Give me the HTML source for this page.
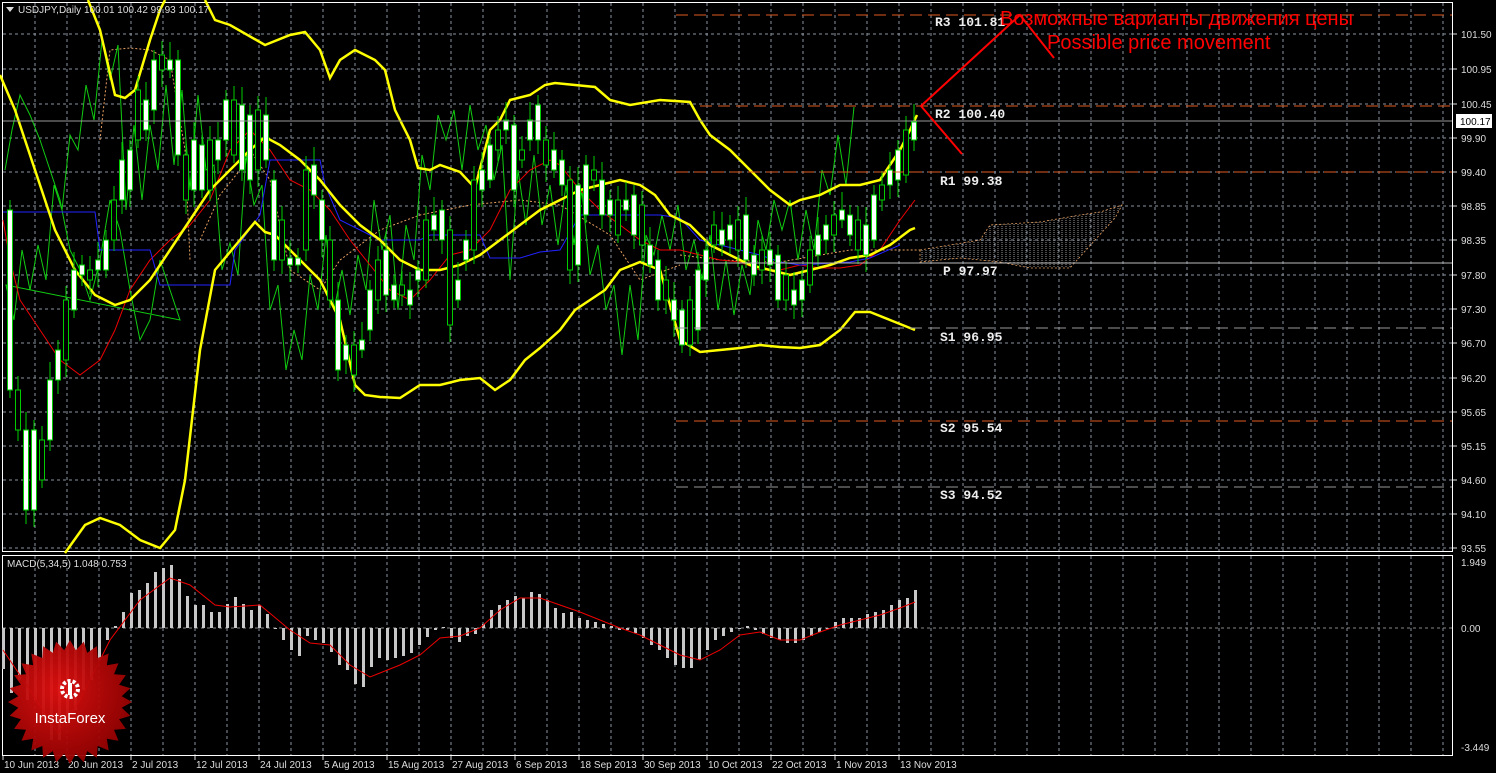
<!DOCTYPE html>
<html><head><meta charset="utf-8"><style>
html,body{margin:0;padding:0;background:#000;width:1496px;height:773px;overflow:hidden}
svg{display:block}
text{font-family:"Liberation Sans",sans-serif}
text.mono{font-family:"Liberation Mono",monospace;font-weight:bold;font-size:13px;fill:#eee}
</style></head><body>
<svg id="s" width="1496" height="773" xmlns="http://www.w3.org/2000/svg">
<defs>
<pattern id="hat" width="4" height="4" patternUnits="userSpaceOnUse"><path d="M2 0V4" stroke="#bbb" stroke-width="0.8" stroke-dasharray="1,1"/></pattern>
</defs>
<rect width="1496" height="773" fill="#000"/>
<g id="grid"></g>
<rect x="2.5" y="2.5" width="1450" height="549" fill="none" stroke="#fff"/>
<rect x="2.5" y="555.5" width="1450" height="200" fill="none" stroke="#fff"/>
<line x1="3" y1="628" x2="1452" y2="628" stroke="#888" stroke-dasharray="3,3"/>
<path d="M920 250 L980 240 L990 225 L1040 222 L1080 215 L1100 212 L1122 205 L1115 218 L1095 240 L1070 268 L1030 268 L1000 262 L960 258 L920 262Z" fill="url(#hat)" stroke="#e8a060" stroke-dasharray="2,2" stroke-width="0.8"/>
<path d="M680 255 L720 260 L780 262 L850 250 L920 250" fill="none" stroke="#e8a060" stroke-dasharray="2,2"/>
<path d="M100 140 L110 50 L130 48 L150 50 L170 60 L185 150 L190 260 M200 240 L220 195 L240 170 L250 150 L270 180 L290 270 L320 290 L340 260 L380 230 L420 215 L470 205 L520 200 L560 205 L610 235 L640 280 L680 265" fill="none" stroke="#e8a060" stroke-dasharray="2,2"/>
<g id="ind"></g>
<g id="candles"></g>
<g id="macd"></g>
<g stroke-width="1">
<line x1="676" y1="15" x2="1452" y2="15" stroke="#e05a20" stroke-dasharray="12,6"/>
<line x1="700" y1="106" x2="1452" y2="106" stroke="#e05a20" stroke-dasharray="12,6"/>
<line x1="676" y1="172" x2="1452" y2="172" stroke="#e05a20" stroke-dasharray="12,6"/>
<line x1="676" y1="263" x2="1452" y2="263" stroke="#bbb"/>
<line x1="676" y1="328" x2="1452" y2="328" stroke="#999" stroke-dasharray="12,6"/>
<line x1="676" y1="421" x2="1452" y2="421" stroke="#e05a20" stroke-dasharray="12,6"/>
<line x1="676" y1="487" x2="1452" y2="487" stroke="#999" stroke-dasharray="12,6"/>
<line x1="3" y1="121" x2="1452" y2="121" stroke="#999"/>
</g>
<text class="mono" x="935" y="26">R3 101.81</text>
<text class="mono" x="935" y="118">R2 100.40</text>
<text class="mono" x="940" y="185">R1 99.38</text>
<text class="mono" x="943" y="275">P 97.97</text>
<text class="mono" x="940" y="341">S1 96.95</text>
<text class="mono" x="940" y="432">S2 95.54</text>
<text class="mono" x="940" y="499">S3 94.52</text>
<g stroke="#f00" stroke-width="2" fill="none">
<path d="M962 154 L921 106 L1020 15 L1054 58"/>
</g>
<text x="1000" y="25" font-size="20" fill="#f00">Возможные варианты движения цены</text>
<text x="1047" y="49" font-size="20" fill="#f00">Possible price movement</text>
<path d="M6 7 L14 7 L10 12Z" fill="#ddd"/>
<text x="18" y="13" font-size="10" fill="#ddd">USDJPY,Daily  100.01 100.42 99.93 100.17</text>
<text x="7" y="567" font-size="10" fill="#ddd">MACD(5,34,5) 1.048 0.753</text>
<g id="axis" font-size="10" fill="#ddd"></g>
<rect x="1456" y="114" width="36" height="14" fill="#fff"/>
<text x="1460" y="125" font-size="10" fill="#000">100.17</text>
<g id="logo"></g>
</svg>
<script>
function add(id,html){document.getElementById(id).insertAdjacentHTML('beforeend',html);}
let g='';
for(let x=35;x<1452;x+=32){g+=`<line x1="${x}" y1="3" x2="${x}" y2="551" stroke="#8a92a0" stroke-dasharray="3,3"/><line x1="${x}" y1="556" x2="${x}" y2="755" stroke="#8a92a0" stroke-dasharray="3,3"/>`;}
const py=[34,69,104,138,172,206,240,275,309,343,378,412,446,480,514,548];
const pl=['101.50','100.95','100.45','99.90','99.40','98.85','98.35','97.80','97.30','96.70','96.20','95.65','95.15','94.60','94.10','93.55'];
let ax='';
py.forEach((y,i)=>{g+=`<line x1="3" y1="${y}" x2="1452" y2="${y}" stroke="#8a92a0" stroke-dasharray="3,3"/>`;ax+=`<line x1="1453" y1="${y}" x2="1457" y2="${y}" stroke="#ddd"/><text x="1461" y="${y+4}">${pl[i]}</text>`;});
ax+=`<text x="1461" y="566">1.949</text><text x="1461" y="632">0.00</text><text x="1461" y="751">-3.449</text>`;
const dl=['10 Jun 2013','20 Jun 2013','2 Jul 2013','12 Jul 2013','24 Jul 2013','5 Aug 2013','15 Aug 2013','27 Aug 2013','6 Sep 2013','18 Sep 2013','30 Sep 2013','10 Oct 2013','22 Oct 2013','1 Nov 2013','13 Nov 2013'];
dl.forEach((d,i)=>{const x=3+64*i;ax+=`<line x1="${x}" y1="756" x2="${x}" y2="760" stroke="#ddd"/><text x="${x+1}" y="768">${d}</text>`;});
add('grid',g);add('axis',ax);
const c=[[210,390],[390,430],[430,510],[430,510],[440,480],[380,440],[350,380],[300,360],[270,310],[265,275],[270,280],[260,270],[240,270],[200,240],[160,200],[150,190],[90,140],[100,130],[60,110],[55,70],[60,70],[60,155],[155,200],[140,190],[145,190],[140,190],[140,160],[100,140],[100,155],[105,170],[115,180],[110,170],[115,160],[180,260],[220,260],[258,265],[258,265],[170,250],[165,195],[200,240],[240,300],[300,370],[345,360],[345,375],[340,350],[290,330],[260,300],[250,295],[285,300],[285,295],[290,305],[270,280],[220,280],[215,230],[210,240],[230,325],[280,300],[240,260],[180,250],[170,190],[145,180],[130,150],[120,130],[125,190],[150,160],[120,140],[105,140],[140,165],[150,170],[160,185],[180,270],[185,265],[165,215],[170,180],[180,215],[200,215],[200,235],[200,210],[195,235],[205,245],[245,265],[260,300],[280,300],[300,320],[310,345],[300,345],[270,330],[250,280],[225,245],[230,245],[225,240],[220,250],[215,260],[255,275],[250,270],[250,265],[255,300],[275,300],[290,305],[280,300],[250,285],[235,255],[225,240],[215,235],[210,220],[215,235],[220,250],[225,255],[195,240],[185,200],[170,185],[150,180],[130,175],[122,140]];
let s='';
c.forEach((v,i)=>{const x=10+8*i;const t=Math.min(v[0],v[1]),b=Math.max(v[0],v[1]);const h=Math.max(b-t,1);
s+=`<line x1="${x}" y1="${t-10-(i%3)*4}" x2="${x}" y2="${b+8+(i%4)*3}" stroke="#0c0"/>`;
s+=`<rect x="${x-2.5}" y="${t}" width="5" height="${h}" fill="${(i%3==1)?'#000':'#fff'}" stroke="#0c0"/>`;});
add('candles',s);
function pl2(p,col,w){return `<polyline points="${p}" fill="none" stroke="${col}" stroke-width="${w}"/>`;}
let ind='';
let gp=[];c.forEach((v,i)=>{const x=10+8*i-60;if(x<3)return;gp.push(`${x},${(i%2?v[0]-15:v[1]+10)}`);});
ind+=pl2('5,170 12,130 20,95 30,115 40,140 50,170 60,200 70,250 80,270 90,300 100,260 110,200 120,230 130,290 140,340 150,320 160,260 170,290 180,320 '+gp.join(' '),'#1c1',1);
ind+=pl2('3,220 10,260 20,300 40,330 60,360 80,375 100,360 115,330 130,290 150,260 170,240 190,225 210,200 230,150 250,130 270,150 290,180 310,190 330,210 350,240 370,265 390,290 410,300 430,280 450,255 470,250 490,230 510,190 530,170 550,160 560,165 580,190 600,210 620,225 640,240 660,250 680,250 700,255 720,260 740,262 760,270 780,270 800,265 820,268 840,268 860,265 880,250 900,220 915,200','#e00',1);
ind+=pl2('3,212 30,212 95,212 100,250 150,250 160,285 230,285 235,250 260,215 270,160 320,160 325,185 340,220 380,240 420,240 430,235 480,235 490,258 520,258 540,252 560,250 580,215 660,215 680,218 700,240 760,255 780,262 800,265 850,262 870,258 900,245','#22f',1);
ind+=pl2('88,0 100,30 115,95 125,98 135,90 150,40 160,10 165,0','#ff0',2.5);
ind+=pl2('205,0 215,20 230,25 265,45 290,35 305,32 320,50 330,78 340,60 355,50 375,60 385,70 395,110 410,140 418,168 430,170 440,165 460,172 475,188 490,130 500,120 510,100 530,95 545,85 555,83 575,85 595,87 610,100 630,105 660,100 690,102 700,120 710,135 730,150 750,170 770,190 790,205 800,200 820,195 840,185 860,185 880,180 890,165 900,150 910,130 917,115','#ff0',2.5);
ind+=pl2('0,75 15,110 35,170 55,230 75,270 95,295 115,305 130,300 150,280 170,250 190,220 210,190 230,170 250,150 265,137 280,145 300,160 320,180 340,205 360,225 380,240 400,260 420,270 440,270 460,265 480,255 500,240 520,225 540,210 560,200 580,190 600,185 620,180 640,185 655,195 670,215 690,225 710,245 730,255 750,265 770,270 790,275 810,270 830,265 850,258 870,255 890,245 910,230 915,228','#ff0',2.5);
ind+=pl2('65,553 85,525 100,518 120,525 140,540 160,548 175,530 185,480 200,350 215,270 240,240 255,222 265,232 275,235 290,250 305,265 320,280 340,320 355,385 365,395 380,397 400,398 420,385 440,385 460,380 480,378 495,390 510,380 525,360 540,348 560,330 575,310 590,300 605,290 620,270 640,262 660,270 680,340 700,352 720,350 740,348 760,345 780,347 800,348 820,345 840,330 855,312 870,312 890,320 915,330','#ff0',2.5);
add('ind',ind);
const m=[669,693,680,700,700,720,740,740,720,710,690,680,660,640,626,612,593,590,583,572,568,565,579,596,605,605,612,612,604,597,604,610,605,614,629,640,650,656,636,640,643,652,665,670,684,687,667,658,660,658,656,653,645,637,630,627,638,642,636,634,624,610,605,600,596,598,592,594,600,608,613,612,618,620,622,624,626,630,630,633,638,645,650,658,665,668,668,660,650,640,636,632,628,626,630,634,638,640,643,643,640,636,632,628,622,618,618,618,614,612,610,605,600,598,590];
let ms='';
m.forEach((y,i)=>{const x=2+8*i;const t=Math.min(y,628),h=Math.max(Math.abs(y-628),1);ms+=`<rect x="${x}" y="${t}" width="3" height="${h}" fill="#c8c8c8"/>`;});
ms+=pl2('3,650 30,690 58,733 80,700 110,640 140,600 170,578 190,585 215,605 230,607 260,605 290,630 310,643 330,645 350,665 370,677 400,665 420,655 440,638 460,636 480,628 500,610 520,598 540,598 560,605 580,612 600,620 620,628 640,635 660,645 680,655 700,660 720,650 740,635 760,632 780,640 800,640 820,632 840,625 860,620 880,615 900,608 915,602','#e00',1);
add('macd',ms);
let pts=[];const cx=70,cy=702,n=28;
for(let k=0;k<n*2;k++){const r=k%2?52:62;const a=Math.PI*k/n;pts.push(`${(cx+r*Math.cos(a)).toFixed(1)},${(cy+r*Math.sin(a)).toFixed(1)}`);}
add('logo',`<defs><radialGradient id="lg" cx="0.4" cy="0.4" r="0.7"><stop offset="0" stop-color="#e01010"/><stop offset="1" stop-color="#8a0000"/></radialGradient></defs><polygon points="${pts.join(' ')}" fill="url(#lg)" opacity="0.95"/><circle cx="70" cy="689" r="8" fill="none" stroke="#fff" stroke-width="4" stroke-dasharray="3,2"/><rect x="68" y="683" width="4" height="12" fill="#fff"/><text x="70" y="723" font-size="15" fill="#fff" text-anchor="middle">InstaForex</text>`);
</script>
</body></html>
